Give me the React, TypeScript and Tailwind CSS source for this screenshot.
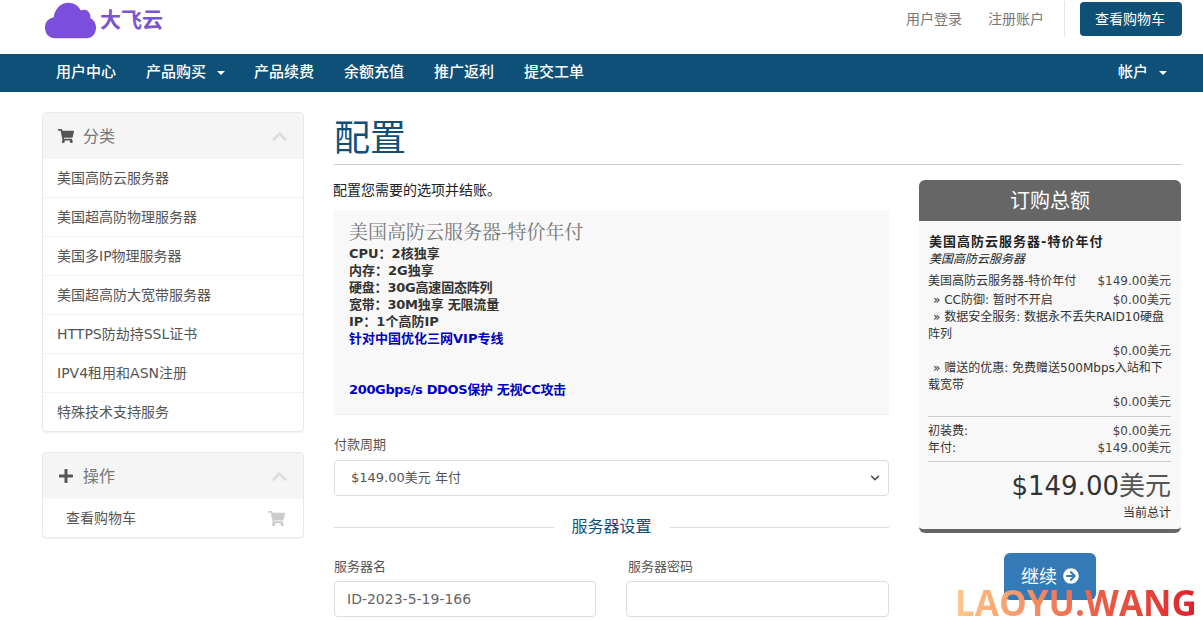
import { FaShoppingCart, FaPlus, FaChevronUp, FaArrowCircleRight, FaChevronDown } from "react-icons/fa";

const CJK = '"DejaVu Sans","Noto Sans CJK SC",sans-serif';
const cats = ["美国高防云服务器", "美国超高防物理服务器", "美国多IP物理服务器", "美国超高防大宽带服务器", "HTTPS防劫持SSL证书", "IPV4租用和ASN注册", "特殊技术支持服务"];

function Caret() {
  return <span className="ml-[11px] inline-block w-0 h-0 border-x-[4px] border-x-transparent border-t-[4px] border-t-white align-middle" />;
}

function PanelHead({ icon, title }: { icon: React.ReactNode; title: string }) {
  return (
    <div className="h-[46px] bg-[#f5f5f5] flex items-center pl-[15px] pr-[15px] rounded-t">
      <span className="text-[#555] text-[16px] w-[25px]">{icon}</span>
      <span className="text-[16px] leading-[24px] mt-[2px] text-[#777]">{title}</span>
      <FaChevronUp className="ml-auto text-[#ddd] text-[17px]" />
    </div>
  );
}

function Row({ l, r, cls = "" }: { l: string; r: string; cls?: string }) {
  return (
    <div className={`flex justify-between ${cls}`}>
      <span>{l}</span>
      <span className="text-[#444]">{r}</span>
    </div>
  );
}

export default function App() {
  return (
    <div className="h-[621px] w-[1203px] overflow-hidden bg-white relative text-[#333]" style={{ fontFamily: CJK }}>
      <header className="h-[54px] flex pl-[45px] pr-[21px]">
        <div className="flex items-start">
          <svg width="52" height="38" viewBox="0 0 54 38" className="mt-[1px]">
            <path d="M11 38 C4 38 0 33 0 27 C0 21 4 17 9 16.500 C10 7 17 1 24 1 C30 1 35 4 37 9 C41 7 46 9 47 14 C47.500 15.500 47 16 47 17 C51 19 53 23 53 27 C53 33 49 38 43 38 Z" fill="#7b4fdc" />
          </svg>
          <span className="ml-[3px] mt-[5px] text-[21px] leading-[30px] font-bold text-[#7a55d0]">大飞云</span>
        </div>
        <div className="ml-auto flex items-start">
          <span className="mt-[9px] text-[14px] leading-[20px] text-[#777]">用户登录</span>
          <span className="mt-[9px] ml-[26px] text-[14px] leading-[20px] text-[#777]">注册账户</span>
          <div className="ml-[20px] w-px h-[36px] mt-[1px] bg-[#e5e5e5]" />
          <button className="ml-[15px] mt-[2px] w-[102px] h-[34px] rounded bg-[#0f5078] text-white text-[14px] pr-[2px]">查看购物车</button>
        </div>
      </header>

      <nav className="h-[38px] bg-[#0f5078] flex items-center pl-[56px] pr-[36px] pb-px text-white text-[15px] font-medium whitespace-nowrap">
        <span>用户中心</span>
        <span className="ml-[30px] w-[78px]">产品购买<Caret /></span>
        <span className="ml-[30px]">产品续费</span>
        <span className="ml-[30px]">余额充值</span>
        <span className="ml-[30px]">推广返利</span>
        <span className="ml-[30px]">提交工单</span>
        <span className="ml-auto">帐户<Caret /></span>
      </nav>

      <div className="flex pl-[42px] pr-[21px] pt-[20px]">
        <aside className="w-[262px] shrink-0">
          <div className="border border-[#e8e8e8] rounded shadow-[0_1px_1px_rgba(0,0,0,0.05)]">
            <PanelHead icon={<FaShoppingCart />} title="分类" />
            {cats.map((c, i) => (
              <div key={c} className={`flex items-center pl-[14px] text-[14px] text-[#555] ${i < cats.length - 1 ? "h-[39px] border-b border-[#f2f2f2]" : "h-[38px]"}`}>{c}</div>
            ))}
          </div>
          <div className="mt-[20px] border border-[#e8e8e8] rounded shadow-[0_1px_1px_rgba(0,0,0,0.05)]">
            <PanelHead icon={<FaPlus />} title="操作" />
            <div className="h-[38px] flex items-center pl-[23px] pr-[18px] text-[14px] text-[#555]">
              查看购物车
              <FaShoppingCart className="ml-auto text-[#ccc] text-[17px]" />
            </div>
          </div>
        </aside>

        <main className="ml-[30px] flex-1 min-w-0">
          <h1 className="text-[36px] leading-[54px] text-[#0f5078] h-[52px] border-b border-[#ccc] box-content">配置</h1>
          <div className="flex mt-[15px]">
            <div className="w-[555px]">
              <p className="text-[14px] leading-[20px] -ml-px text-[#222]">配置您需要的选项并结账。</p>
              <div className="mt-[10px] h-[205px] bg-[#f8f8f8] border-b border-[#eee] pl-[15px] pt-[8px] font-bold text-[13px] leading-[17px] text-[#333]">
                <div className="text-[19px] leading-[26px] font-normal text-[#777]" style={{ fontFamily: '"Noto Serif CJK SC","Liberation Serif","Noto Sans CJK SC",serif' }}>美国高防云服务器-特价年付</div>
                <div className="mt-[1px]">CPU：2核独享</div>
                <div>内存：2G独享</div>
                <div className="tracking-[-0.2px]">硬盘：30G高速固态阵列</div>
                <div className="tracking-[-0.2px]">宽带：30M独享 无限流量</div>
                <div>IP：1个高防IP</div>
                <div className="text-[#0000c0]">针对中国优化三网VIP专线</div>
                <div className="mt-[34px] text-[#0000c0] tracking-[-0.35px]">200Gbps/s DDOS保护 无视CC攻击</div>
              </div>
              <label className="block mt-[21px] text-[13px] leading-[17px] text-[#555]">付款周期</label>
              <div className="mt-[7px] h-[36px] border border-[#ddd] rounded flex items-center pl-[16px] pr-[8px] text-[13px] text-[#555]">
                $149.00美元 年付
                <FaChevronDown className="ml-auto text-[#555] text-[10px]" />
              </div>
              <div className="flex items-center mt-[19px] h-[24px]">
                <div className="flex-1 h-px bg-[#ddd]" />
                <span className="px-[18px] text-[16px] text-[#0f5078]">服务器设置</span>
                <div className="flex-1 h-px bg-[#ddd]" />
              </div>
              <div className="flex mt-[19px] gap-[30px]">
                <div className="w-[262px]">
                  <label className="block text-[13px] leading-[17px] text-[#555]">服务器名</label>
                  <input readOnly value="ID-2023-5-19-166" className="mt-[6px] w-full h-[36px] border border-[#ddd] rounded px-[12px] text-[14px] text-[#666]" />
                </div>
                <div className="flex-1">
                  <label className="block pl-[2px] text-[13px] leading-[17px] text-[#555]">服务器密码</label>
                  <input readOnly className="mt-[6px] w-full h-[36px] border border-[#ddd] rounded px-[12px] text-[14px]" />
                </div>
              </div>
            </div>

            <div className="ml-[30px] w-[262px]">
              <div className="rounded-md overflow-hidden bg-[#f8f8f8] border-b-[4px] border-[#666]">
                <div className="h-[41px] bg-[#666] text-white text-[20px] flex items-center justify-center">订购总额</div>
                <div className="pl-[9px] pr-[10px] pt-[12px] pb-[7px] text-[12px] leading-[17px] text-[#333]">
                  <div className="pl-px font-bold text-[13px] tracking-[1px] leading-[18px] text-[#222]">美国高防云服务器-特价年付</div>
                  <div className="pl-px italic text-[#222]">美国高防云服务器</div>
                  <Row cls="mt-[5px]" l="美国高防云服务器-特价年付" r="$149.00美元" />
                  <Row cls="mt-[2px] pl-[5px]" l="» CC防御: 暂时不开启" r="$0.00美元" />
                  <div className="indent-[5px]">» 数据安全服务: 数据永不丢失RAID10硬盘阵列</div>
                  <div className="text-right text-[#444]">$0.00美元</div>
                  <div className="indent-[5px]">» 赠送的优惠: 免费赠送500Mbps入站和下载宽带</div>
                  <div className="text-right text-[#444]">$0.00美元</div>
                  <div className="border-t border-[#ccc] mt-[5px] pt-[6px]">
                    <Row l="初装费:" r="$0.00美元" />
                    <Row l="年付:" r="$149.00美元" />
                  </div>
                  <div className="border-t border-[#ccc] mt-[4px] pt-[8px] text-right">
                    <div className="text-[26px] leading-[32px]">$149.00<span className="text-[#555]">美元</span></div>
                    <div className="mt-[3px]">当前总计</div>
                  </div>
                </div>
              </div>
              <div className="mt-[20px] flex justify-center">
                <button className="w-[92px] h-[47px] bg-[#337ab7] rounded-md text-white text-[18px] flex items-center justify-center gap-[6px] pb-px">
                  继续 <FaArrowCircleRight className="text-[16px]" />
                </button>
              </div>
            </div>
          </div>
        </main>
      </div>

      <div className="absolute left-[955px] top-[582px] text-[35px] leading-[42px] font-bold whitespace-nowrap bg-gradient-to-r from-[#fcc88a] via-[#ee6a4c] to-[#dc1c2c] bg-clip-text text-transparent" style={{ fontFamily: '"Open Sans",sans-serif' }}>LAOYU.WANG</div>
    </div>
  );
}
